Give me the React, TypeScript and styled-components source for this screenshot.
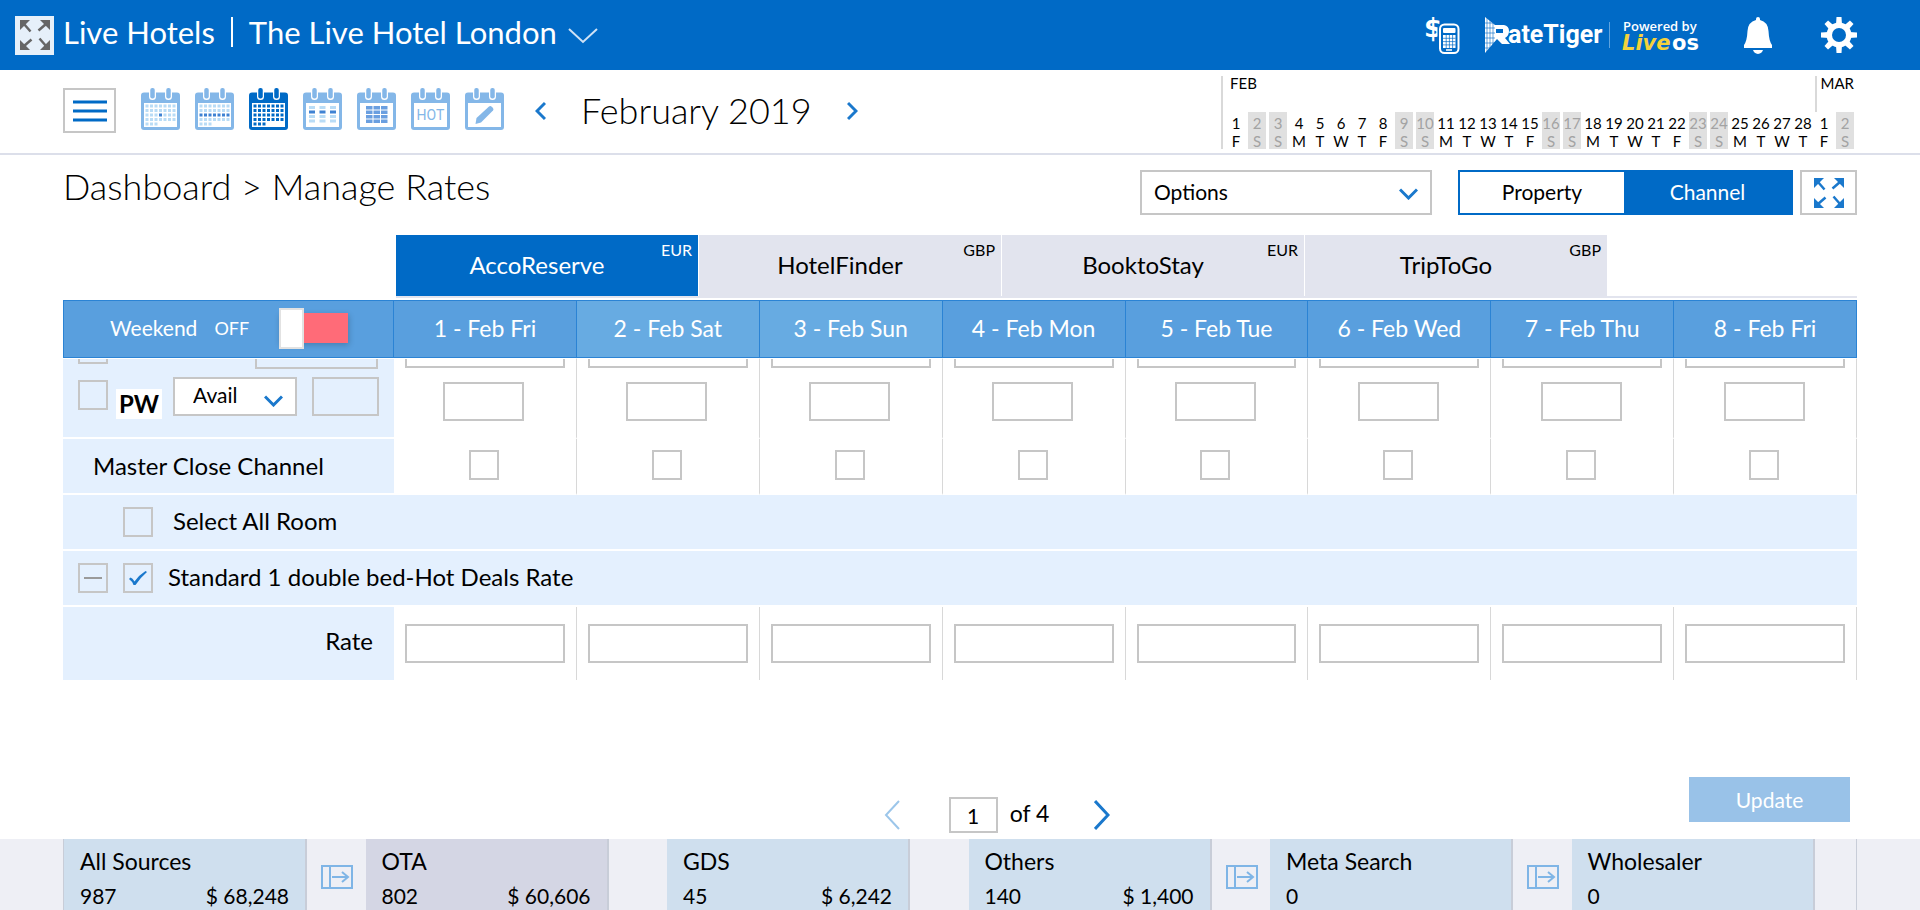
import React from "react";
import styled, { createGlobalStyle, css } from "styled-components";

const color = {
  brand: "#006ac6",
  brandSoft: "#84b7e8",
  icon: "#1a78cc",
  border: "#c6c6c6",
  rule: "#dcdfea",
  tab: "#e2e4ee",
  row: "#e4f0fe",
  head: "#599fde",
  headWeekend: "#67abe2",
  headLine: "#2b83d4",
};

const GlobalStyle = createGlobalStyle`
  *, *::before, *::after { box-sizing: border-box; }
  body { margin: 0; background: #fff; color: #000; }
  body, button, input, select { font-family: Lato, "Liberation Sans", sans-serif; }
  button, select, input { margin: 0; padding: 0; color: inherit; }
  button { cursor: pointer; }
  svg { display: block; flex: none; }
`;

const Page = styled.div`
  display: flex;
  flex-direction: column;
  height: 100vh;
  overflow: hidden;
`;

/* ---------- top bar ---------- */

const TopBar = styled.header`
  display: flex;
  flex: none;
  align-items: center;
  height: 70px;
  padding: 0 63px 0 15px;
  background: ${color.brand};
  color: #fff;
`;

const TopExpand = styled.button`
  display: grid;
  place-items: center;
  width: 39px;
  height: 39px;
  margin-right: 9px;
  border: 0;
  background: #e6f0fa;
`;

const HotelGroup = styled.span`
  padding-right: 16px;
  border-right: 2px solid #fff;
  font-size: 31px;
  line-height: 30px;
`;

const HotelPicker = styled.button`
  display: flex;
  align-items: center;
  gap: 11px;
  padding-left: 16px;
  border: 0;
  background: none;
  font-size: 31px;
  line-height: 30px;

  svg {
    margin-top: 7px;
  }
`;

const HeaderText = styled.div`
  display: flex;
  align-items: center;
  padding-bottom: 6px;
`;

const TopActions = styled.nav`
  display: flex;
  align-items: center;
  margin-left: auto;
`;

const IconButton = styled.button<{ $gap?: number }>`
  display: grid;
  place-items: center;
  margin-left: ${(p) => p.$gap ?? 0}px;
  border: 0;
  background: none;
`;

const Brand = styled.a`
  margin-left: 25px;
`;

/* ---------- tool bar ---------- */

const ToolBar = styled.div`
  display: flex;
  flex: none;
  justify-content: space-between;
  height: 85px;
  padding: 0 63px;
  border-bottom: 2px solid ${color.rule};
`;

const ToolGroup = styled.div`
  display: flex;
  align-items: flex-start;
  padding-top: 18px;
`;

const OutlineButton = styled.button<{ $width: number }>`
  display: grid;
  place-items: center;
  width: ${(p) => p.$width}px;
  height: 45px;
  border: 2px solid ${color.border};
  background: #fff;
`;

const ViewList = styled.div`
  display: flex;
  gap: 15px;
  margin-left: 25px;
`;

const MonthNav = styled.div`
  display: flex;
  align-items: center;
  gap: 35px;
  height: 45px;
  margin-left: 31px;
`;

const Month = styled.h2`
  margin: 0;
  font-size: 36px;
  font-weight: 300;
  line-height: 45px;
`;

const MiniCalendar = styled.div`
  display: flex;
  flex-direction: column;
  padding: 6px 3px 4px 0;
`;

const MonthRow = styled.div`
  display: flex;
  justify-content: space-between;
  height: 36px;
`;

const MonthName = styled.span<{ $last?: boolean }>`
  border-left: 2px solid #d9d9d9;
  padding-left: ${(p) => (p.$last ? 4 : 7)}px;
  font-size: 15px;
  line-height: 15px;
`;

const DayRow = styled.ol`
  display: flex;
  gap: 3px;
  margin: 0;
  padding: 0 0 0 4px;
  border-left: 2px solid #d9d9d9;
  list-style: none;
`;

const Day = styled.li<{ $off: boolean }>`
  display: flex;
  flex-direction: column;
  align-items: center;
  width: 18px;
  height: 37px;
  padding-top: 2px;
  font-size: 15px;
  line-height: 18px;
  color: ${(p) => (p.$off ? "#a3a3a3" : "#000")};
  background: ${(p) => (p.$off ? "#e0e0e0" : "transparent")};
`;

/* ---------- page head ---------- */

const Main = styled.main`
  display: flex;
  flex: 1;
  flex-direction: column;
  min-height: 0;
  padding: 0 63px;
`;

const PageHead = styled.div`
  display: flex;
  align-items: flex-start;
  justify-content: space-between;
  padding-top: 15px;
`;

const PageTitle = styled.h1`
  margin: 0;
  font-size: 36px;
  font-weight: 300;
  line-height: 32px;
`;

const HeadActions = styled.div`
  display: flex;
  gap: 7px;
`;

const SelectBox = styled.label<{ $width: number; $small?: boolean }>`
  display: grid;
  align-items: center;
  width: ${(p) => p.$width}px;
  height: ${(p) => (p.$small ? 39 : 45)}px;
  border: 2px solid ${color.border};
  background: #fff;

  select,
  svg {
    grid-area: 1 / 1;
  }

  select {
    width: 100%;
    height: 100%;
    padding: ${(p) => (p.$small ? "0 0 4px 18px" : "0 0 2px 12px")};
    border: 0;
    background: none;
    font-size: 21px;
    appearance: none;
  }

  svg {
    justify-self: end;
    margin-right: 12px;
    margin-top: ${(p) => (p.$small ? 8 : 2)}px;
    pointer-events: none;
  }
`;

const Segments = styled.div`
  display: flex;
  width: 335px;
  height: 45px;
  margin-left: 19px;
  border: 2px solid ${color.brand};
`;

const Segment = styled.button<{ $on?: boolean }>`
  flex: ${(p) => (p.$on ? 167 : 164)} 1 0;
  padding-bottom: 2px;
  border: 0;
  background: ${(p) => (p.$on ? color.brand : "#fff")};
  color: ${(p) => (p.$on ? "#fff" : "#000")};
  font-size: 21px;
`;

const Tabs = styled.div`
  display: flex;
  gap: 1px;
  margin: 20px 0 2px 333px;
  border-bottom: 2px solid ${color.tab};
`;

const Tab = styled.button<{ $on?: boolean }>`
  display: grid;
  width: 302px;
  height: 61px;
  padding: 0 6px;
  border: 0;
  background: ${(p) => (p.$on ? color.brand : color.tab)};
  color: ${(p) => (p.$on ? "#fff" : "#000")};
  font-size: 24px;
  line-height: 59px;

  span,
  small {
    grid-area: 1 / 1;
  }

  span {
    padding-right: 20px;
  }

  small {
    justify-self: end;
    font-size: 16px;
    line-height: 30px;
  }
`;

/* ---------- rate table ---------- */

const RateTable = styled.table`
  width: 100%;
  table-layout: fixed;
  border-spacing: 0;
`;

const HeadCell = styled.th<{ $weekend?: boolean }>`
  height: 58px;
  padding: 0 0 2px;
  border: solid ${color.headLine};
  border-width: 1px 1px 1px 0;
  background: ${(p) => (p.$weekend ? color.headWeekend : color.head)};
  color: #fff;
  font-size: 23px;
  font-weight: 400;

  &:first-child {
    width: 331px;
    border-left-width: 1px;
  }
`;

const WeekendToggle = styled.label`
  display: flex;
  align-items: center;
  padding-left: 46px;
  font-size: 21px;
  line-height: 30px;

  small {
    margin: 0 30px 0 17px;
    font-size: 18px;
  }
`;

const Switch = styled.input`
  width: 69px;
  height: 30px;
  margin: 0;
  background: #ff6b78;
  box-shadow: 1px 2px 6px rgba(0, 0, 0, 0.2);
  appearance: none;

  &::before {
    display: block;
    width: 25px;
    height: 41px;
    margin-top: -5px;
    border: 2px solid #e2e2e2;
    background: #fff;
    content: "";
  }

  &:checked::before {
    margin-left: 44px;
  }
`;

type RowKind = "cut" | "tall" | "line" | "rate";

const rowHeight: Record<RowKind, number> = { cut: 11, tall: 70, line: 56, rate: 73 };

const cellBase = css<{ $kind: RowKind }>`
  height: ${(p) => rowHeight[p.$kind]}px;
  padding: 0;
  border: 0 solid #fff;
  border-top-width: ${(p) => (p.$kind === "cut" ? 1 : 0)}px;
  border-bottom-width: ${(p) => (p.$kind === "tall" || p.$kind === "line" ? 2 : 0)}px;
  font-size: 24px;
  font-weight: 400;
  text-align: left;
`;

const LabelCell = styled.th<{ $kind: RowKind }>`
  ${cellBase}
  background: ${color.row};
`;

const DayCell = styled.td<{ $kind: RowKind }>`
  ${cellBase}
  border-right: 1px solid #d8d8d8;
`;

const Peek = styled.div<{ $label?: boolean }>`
  display: flex;
  align-items: flex-end;
  justify-content: space-between;
  height: 10px;
  padding: ${(p) => (p.$label ? "0 16px 0 15px" : "0 11px 1px")};
  overflow: hidden;
`;

const PeekPick = styled.div`
  padding-bottom: 5px;
`;

const RowLabel = styled.label<{ $indent: number }>`
  display: flex;
  align-items: center;
  padding-left: ${(p) => p.$indent}px;
  line-height: 30px;
`;

const RowText = styled.span<{ $indent: number }>`
  display: block;
  padding: 0 0 2px ${(p) => p.$indent}px;
`;

const LabelBox = styled.div`
  display: flex;
  align-items: center;
`;

const RateLabel = styled.div`
  padding: 0 21px 6px 0;
  text-align: right;
`;

const Pick = styled.span`
  display: grid;
  place-items: center;

  > * {
    grid-area: 1 / 1;
  }

  svg {
    pointer-events: none;
  }
`;

const Tick = styled.input`
  display: block;
  flex: none;
  width: 30px;
  height: 30px;
  border: 2px solid ${color.border};
  background: none;
  appearance: none;
`;

const Fold = styled.button`
  display: grid;
  place-items: center;
  width: 30px;
  height: 30px;
  margin: 0 15px;
  border: 2px solid ${color.border};
  background: none;
`;

const Field = styled.input<{ $width?: number }>`
  display: block;
  flex: none;
  width: ${(p) => (p.$width ? `${p.$width}px` : "100%")};
  height: 39px;
  border: 2px solid ${color.border};
  background: none;
  font-size: 21px;
  text-align: center;
`;

const Centered = styled.div<{ $wide?: boolean }>`
  display: flex;
  justify-content: center;
  padding: ${(p) => (p.$wide ? "0 11px" : "0 2px 3px 0")};
`;

const PlanRow = styled.div`
  display: flex;
  align-items: flex-start;
  height: 52px;
  padding: 0 15px;
`;

const PlanTag = styled.b`
  margin: 12px 11px 0 8px;
  padding: 0 3px;
  background: #fff;
  font-size: 24px;
  line-height: 30px;
`;

const PlanPick = styled.div`
  padding-top: 3px;
`;

const PlanField = styled.div`
  margin-left: auto;
`;

/* ---------- pager ---------- */

const PagerBar = styled.div`
  display: grid;
  grid-template-columns: 1fr auto 1fr;
  margin-top: auto;
  padding-bottom: 6px;
`;

const Pager = styled.div`
  display: flex;
  grid-column: 2;
  align-items: center;
  padding: 20px 0 0 74px;
  font-size: 23px;
`;

const PageField = styled.input`
  width: 49px;
  height: 36px;
  margin: 0 12px 0 49px;
  border: 2px solid ${color.border};
  font-size: 21px;
  text-align: center;
`;

const PageTotal = styled.span`
  margin-right: 45px;
  padding-bottom: 4px;
`;

const Update = styled.button`
  justify-self: end;
  width: 161px;
  height: 45px;
  margin-right: 7px;
  border: 0;
  background: #99c2e8;
  color: #fff;
  font-size: 21px;
`;

/* ---------- sources ---------- */

const Sources = styled.footer`
  flex: none;
  height: 71px;
  padding: 0 63px;
  background: #eeeff5;
`;

const SourceList = styled.div`
  display: flex;
  height: 100%;
  border: solid #c8cdd8;
  border-width: 0 1px;
`;

const SourceSlot = styled.section`
  display: flex;
  flex: 302 1 0;
  min-width: 0;

  &:last-child {
    flex-grow: 285;
  }

  > svg {
    margin: 26px 13px 0 14px;
  }
`;

const SourceCard = styled.div<{ $alt?: boolean }>`
  display: grid;
  flex: none;
  grid-template-columns: auto auto;
  grid-template-rows: 30px 30px;
  row-gap: 5px;
  width: 243px;
  padding: 7px 16px;
  border-right: 2px solid #c8cdd8;
  background: ${(p) => (p.$alt ? "#d4d6e4" : "#cfdfee")};
  font-size: 21px;
  line-height: 30px;

  h3 {
    grid-column: 1 / -1;
    margin: 0;
    font-size: 23px;
    font-weight: 400;
  }

  span:last-child:not(:nth-child(2)) {
    text-align: right;
  }
`;

/* ---------- drawings ---------- */

const ExpandIcon = ({ size, fill }: { size: number; fill: string }) => (
  <svg width={size} height={size} viewBox="0 0 30 30" fill={fill} stroke={fill} aria-hidden="true">
    {[0, 90, 180, 270].map((a) => (
      <g key={a} transform={`rotate(${a} 15 15)`}>
        <path d="M0 0h10L7 3l-4 4-3 3z" stroke="none" />
        <path d="M4 4l6.500 7.500" strokeWidth="2.500" fill="none" />
      </g>
    ))}
  </svg>
);

const Chevron = ({ w, h, d, width = 2, stroke = color.icon }: { w: number; h: number; d: string; width?: number; stroke?: string }) => (
  <svg width={w} height={h} viewBox={`0 0 ${w} ${h}`} fill="none" stroke={stroke} strokeWidth={width} aria-hidden="true">
    <path d={d} />
  </svg>
);

const dots = (pick: (c: number, r: number) => string) =>
  [0, 1, 2, 3, 4].flatMap((r) =>
    [0, 1, 2, 3, 4, 5, 6]
      .filter((c) => r < 4 || c < 3)
      .map((c) => <rect key={`${r}-${c}`} x={4.5 + c * 4.5} y={16.5 + r * 4.5} width="3" height="3" fill={pick(c, r)} />)
  );

const pale = "#b9dcf6";
const strong = "#3f82d3";

const CalendarIcon = ({ fill, children }: { fill: string; children: React.ReactNode }) => (
  <svg width="39" height="42" viewBox="0 0 39 42" aria-hidden="true">
    <rect y="4.500" width="39" height="37.500" rx="3" fill={fill} />
    <rect x="3" y="15" width="33" height="24" fill="#fff" />
    {[11.5, 27.5].map((x) => (
      <g key={x}>
        <path d={`M${x - 3.5} 4v4.500a3.500 3.500 0 0 0 7 0V4z`} fill="#fff" />
        <rect x={x - 2.25} width="4.500" height="10.500" rx="2" fill={fill} />
      </g>
    ))}
    {children}
  </svg>
);

const views: { name: string; fill: string; art: React.ReactNode }[] = [
  { name: "Day view", fill: color.brandSoft, art: dots((c, r) => (c === 3 && r === 2 ? strong : pale)) },
  { name: "Week view", fill: color.brandSoft, art: dots((_, r) => (r === 2 ? strong : pale)) },
  { name: "Month view", fill: color.brand, art: dots(() => color.brand) },
  {
    name: "Column view",
    fill: color.brandSoft,
    art: [0, 1, 2, 3].flatMap((r) =>
      [6, 16.5, 27].map((x) => (
        <rect key={`${r}-${x}`} x={x} y={18 + r * 4.5} width="6" height="3" fill={r === 1 ? strong : pale} />
      ))
    ),
  },
  {
    name: "Grid view",
    fill: color.brandSoft,
    art: [0, 1, 2, 3].flatMap((r) =>
      [9, 16.5, 24].map((x) => <rect key={`${r}-${x}`} x={x} y={18 + r * 4.5} width="6.500" height="3.500" fill="#6a9fe0" />)
    ),
  },
  {
    name: "Hot dates",
    fill: color.brandSoft,
    art: (
      <text x="19.500" y="32" textAnchor="middle" fontFamily="Roboto, sans-serif" fontSize="14" fill={color.brandSoft}>
        HOT
      </text>
    ),
  },
  {
    name: "Edit dates",
    fill: color.brandSoft,
    art: <path d="M10.500 36l1-6L24 18.500q1.500-1 3 .5l1 1q1 1.500 0 2.500L16 34.500z" fill={color.brandSoft} />,
  },
];

const MoneyIcon = () => (
  <svg width="35" height="48" viewBox="0 -5 35 48" aria-hidden="true">
    <text x="-1" y="21" fontFamily="'DejaVu Sans', sans-serif" fontWeight="700" fontSize="26" fill="#fff">
      $
    </text>
    <rect x="14" y="7.500" width="20" height="30" rx="5" fill={color.brand} stroke={color.brand} strokeWidth="3" />
    <rect x="15" y="8.500" width="18.500" height="28.500" rx="4.500" fill={color.brand} stroke="#fff" strokeWidth="2" />
    <rect x="18" y="12" width="12.500" height="5" rx="1" fill="#fff" />
    <rect x="18" y="19" width="12.500" height="13" fill="#fff" />
    <path d="M18 22.300h12.500M18 25.600h12.500M18 28.900h12.500M21.200 19v13M24.400 19v13M27.600 19v13" stroke={color.brand} strokeWidth=".7" />
    <path d="M21 34h6" stroke="#fff" strokeWidth="1.500" />
  </svg>
);

const RateTigerLogo = () => (
  <svg width="216" height="40" viewBox="0 0 216 40" role="img" aria-label="RateTiger powered by LiveOS">
    <path d="M0 2l10 8h9q5 1 5 6 0 5-4 7l5 6h-8l-5-5L0 38z" fill="#fff" />
    <path d="M2 3v34M5 5v29M8 8v24M0 8h8M0 13h10M0 18h10M0 23h10M0 28h10M0 33h6" stroke={color.brand} strokeWidth=".6" />
    <path d="M11 14h7v4h-7z" fill={color.brand} />
    <text x="23" y="28" fontFamily="Roboto, sans-serif" fontWeight="700" fontSize="25" fill="#fff">
      ateTiger
    </text>
    <path d="M124.500 7v26" stroke="#5fa3de" />
    <text x="138" y="16" fontFamily="'Open Sans', sans-serif" fontWeight="600" fontSize="13" fill="#fff">
      Powered by
    </text>
    <text x="137" y="35" fontFamily="'DejaVu Sans', sans-serif" fontWeight="700" fontStyle="italic" fontSize="21" fill="#f4d23c">
      Live
    </text>
    <text x="187" y="35" fontFamily="'DejaVu Sans', sans-serif" fontWeight="700" fontSize="21" fill="#fff">
      os
    </text>
  </svg>
);

const BellIcon = () => (
  <svg width="28" height="37" viewBox="0 0 28 37" fill="#fff" aria-hidden="true">
    <path d="M14 0q2 0 2 2v1q8 2 8.500 11 .5 10 3.500 14v3H0v-3q3-4 3.500-14Q4 5 12 3V2q0-2 2-2zM9 33h10q-1 3.500-5 4-4-.5-5-4z" />
  </svg>
);

const GearIcon = () => (
  <svg width="36" height="36" viewBox="0 0 36 36" aria-hidden="true">
    {[0, 45, 90, 135].map((a) => (
      <path key={a} d="M15.500 0h5l.5 8v20l-.5 8h-5l-.5-8V8z" fill="#fff" transform={`rotate(${a} 18 18)`} />
    ))}
    <circle cx="18" cy="18" r="12.500" fill="#fff" />
    <circle cx="18" cy="18" r="7" fill={color.brand} />
  </svg>
);

const OpenIcon = () => (
  <svg width="32" height="24" viewBox="0 0 32 24" fill="none" stroke="#7fb5e6" strokeWidth="2" aria-hidden="true">
    <path d="M1 1h30v22H1zM9 1v22M11 12h16M21 7l6 5-6 5" />
  </svg>
);

/* ---------- data ---------- */

const letters = ["F", "S", "S", "M", "T", "W", "T"];
const miniDays = Array.from({ length: 30 }, (_, i) => ({ day: i < 28 ? i + 1 : i - 27, letter: letters[i % 7] }));

const columns = ["1 - Feb Fri", "2 - Feb Sat", "3 - Feb Sun", "4 - Feb Mon", "5 - Feb Tue", "6 - Feb Wed", "7 - Feb Thu", "8 - Feb Fri"];

const channels = [
  { name: "AccoReserve", currency: "EUR" },
  { name: "HotelFinder", currency: "GBP" },
  { name: "BooktoStay", currency: "EUR" },
  { name: "TripToGo", currency: "GBP" },
];

const sources = [
  { name: "All Sources", count: "987", amount: "$ 68,248", open: true },
  { name: "OTA", count: "802", amount: "$ 60,606", alt: true },
  { name: "GDS", count: "45", amount: "$ 6,242" },
  { name: "Others", count: "140", amount: "$ 1,400", open: true },
  { name: "Meta Search", count: "0", open: true },
  { name: "Wholesaler", count: "0" },
];

export default function App() {
  return (
    <Page>
      <GlobalStyle />
      <TopBar>
        <TopExpand aria-label="Full screen">
          <ExpandIcon size={30} fill="#666" />
        </TopExpand>
        <HeaderText>
          <HotelGroup>Live Hotels</HotelGroup>
          <HotelPicker>
            The Live Hotel London
            <Chevron w={30} h={16} d="M1 1l14 13L29 1" stroke="#cfe2f5" />
          </HotelPicker>
        </HeaderText>
        <TopActions>
          <IconButton aria-label="Currency calculator">
            <MoneyIcon />
          </IconButton>
          <Brand href="#">
            <RateTigerLogo />
          </Brand>
          <IconButton $gap={43} aria-label="Notifications">
            <BellIcon />
          </IconButton>
          <IconButton $gap={49} aria-label="Settings">
            <GearIcon />
          </IconButton>
        </TopActions>
      </TopBar>

      <ToolBar>
        <ToolGroup>
          <OutlineButton $width={53} aria-label="Menu">
            <Chevron w={34} h={22} d="M0 2h34M0 11h34M0 20h34" width={3} stroke={color.brand} />
          </OutlineButton>
          <ViewList>
            {views.map((v) => (
              <IconButton key={v.name} aria-label={v.name}>
                <CalendarIcon fill={v.fill}>{v.art}</CalendarIcon>
              </IconButton>
            ))}
          </ViewList>
          <MonthNav>
            <IconButton aria-label="Previous month">
              <Chevron w={11} h={20} d="M10 2L2 10l8 8" width={3} />
            </IconButton>
            <Month>February 2019</Month>
            <IconButton aria-label="Next month">
              <Chevron w={11} h={20} d="M1 2l8 8-8 8" width={3} />
            </IconButton>
          </MonthNav>
        </ToolGroup>
        <MiniCalendar>
          <MonthRow>
            <MonthName>FEB</MonthName>
            <MonthName $last>MAR</MonthName>
          </MonthRow>
          <DayRow>
            {miniDays.map((d, i) => (
              <Day key={i} $off={d.letter === "S"}>
                <span>{d.day}</span>
                <span>{d.letter}</span>
              </Day>
            ))}
          </DayRow>
        </MiniCalendar>
      </ToolBar>

      <Main>
        <PageHead>
          <PageTitle>Dashboard &gt; Manage Rates</PageTitle>
          <HeadActions>
            <SelectBox $width={292}>
              <select aria-label="Options">
                <option>Options</option>
              </select>
              <Chevron w={19} h={12} d="M1 1.500l8.500 8.500L18 1.500" width={3} />
            </SelectBox>
            <Segments>
              <Segment>Property</Segment>
              <Segment $on>Channel</Segment>
            </Segments>
            <OutlineButton $width={57} aria-label="Expand table">
              <ExpandIcon size={30} fill={color.icon} />
            </OutlineButton>
          </HeadActions>
        </PageHead>

        <Tabs role="tablist">
          {channels.map((c, i) => (
            <Tab key={c.name} $on={i === 0} role="tab" aria-selected={i === 0}>
              <span>{c.name}</span>
              <small>{c.currency}</small>
            </Tab>
          ))}
        </Tabs>

        <RateTable>
          <thead>
            <tr>
              <HeadCell scope="col">
                <WeekendToggle>
                  Weekend <small>OFF</small>
                  <Switch type="checkbox" role="switch" />
                </WeekendToggle>
              </HeadCell>
              {columns.map((c) => (
                <HeadCell key={c} scope="col" $weekend={/Sat|Sun/.test(c)}>
                  {c}
                </HeadCell>
              ))}
            </tr>
          </thead>
          <tbody>
            <tr>
              <LabelCell $kind="cut">
                <Peek $label>
                  <PeekPick>
                    <Tick type="checkbox" aria-label="Select plan" />
                  </PeekPick>
                  <Field $width={123} aria-label="Plan value" />
                </Peek>
              </LabelCell>
              {columns.map((c) => (
                <DayCell key={c} $kind="cut">
                  <Peek>
                    <Field aria-label={`Value for ${c}`} />
                  </Peek>
                </DayCell>
              ))}
            </tr>
            <tr>
              <LabelCell $kind="tall" scope="row">
                <PlanRow>
                  <PlanPick>
                    <Tick type="checkbox" aria-label="Select PW" />
                  </PlanPick>
                  <PlanTag>PW</PlanTag>
                  <SelectBox $width={124} $small>
                    <select aria-label="PW setting">
                      <option>Avail</option>
                    </select>
                    <Chevron w={19} h={12} d="M1 1.500l8.500 8.500L18 1.500" width={3} />
                  </SelectBox>
                  <PlanField>
                    <Field $width={67} aria-label="PW value" />
                  </PlanField>
                </PlanRow>
              </LabelCell>
              {columns.map((c) => (
                <DayCell key={c} $kind="tall">
                  <Centered>
                    <Field $width={81} aria-label={`PW for ${c}`} />
                  </Centered>
                </DayCell>
              ))}
            </tr>
            <tr>
              <LabelCell $kind="line" scope="row">
                <RowText $indent={30}>Master Close Channel</RowText>
              </LabelCell>
              {columns.map((c) => (
                <DayCell key={c} $kind="line">
                  <Centered>
                    <Tick type="checkbox" aria-label={`Master close for ${c}`} />
                  </Centered>
                </DayCell>
              ))}
            </tr>
            <tr>
              <LabelCell $kind="line" scope="row" colSpan={9}>
                <RowLabel $indent={60}>
                  <Tick type="checkbox" />
                  <RowText $indent={20}>Select All Room</RowText>
                </RowLabel>
              </LabelCell>
            </tr>
            <tr>
              <LabelCell $kind="line" scope="row" colSpan={9}>
                <LabelBox>
                  <Fold aria-label="Collapse room">
                    <Chevron w={18} h={2} d="M0 1h18" stroke="#9a9a9a" />
                  </Fold>
                  <RowLabel $indent={0}>
                    <Pick>
                      <Tick type="checkbox" defaultChecked />
                      <svg width="18" height="14" viewBox="0 0 18 14" fill={color.icon} aria-hidden="true">
                        <path d="M1.500 6.500Q3.500 7 5.500 10.500 10 4 16.500 0L18 1Q11 7 6.500 14H4.500Q3 10 0 8z" />
                      </svg>
                    </Pick>
                    <RowText $indent={15}>Standard 1 double bed-Hot Deals Rate</RowText>
                  </RowLabel>
                </LabelBox>
              </LabelCell>
            </tr>
            <tr>
              <LabelCell $kind="rate" scope="row">
                <RateLabel>Rate</RateLabel>
              </LabelCell>
              {columns.map((c) => (
                <DayCell key={c} $kind="rate">
                  <Centered $wide>
                    <Field aria-label={`Rate for ${c}`} />
                  </Centered>
                </DayCell>
              ))}
            </tr>
          </tbody>
        </RateTable>

        <PagerBar>
          <Pager>
            <IconButton aria-label="Previous page">
              <Chevron w={16} h={30} d="M15 1L2 15l13 14" stroke="#9cc6ea" />
            </IconButton>
            <PageField aria-label="Page" defaultValue="1" />
            <PageTotal>of 4</PageTotal>
            <IconButton aria-label="Next page">
              <Chevron w={16} h={30} d="M1 1l13 14L1 29" width={3} />
            </IconButton>
          </Pager>
          <Update>Update</Update>
        </PagerBar>
      </Main>

      <Sources>
        <SourceList>
          {sources.map((s) => (
            <SourceSlot key={s.name}>
              <SourceCard $alt={s.alt}>
                <h3>{s.name}</h3>
                <span>{s.count}</span>
                {s.amount && <span>{s.amount}</span>}
              </SourceCard>
              {s.open && <OpenIcon />}
            </SourceSlot>
          ))}
        </SourceList>
      </Sources>
    </Page>
  );
}
